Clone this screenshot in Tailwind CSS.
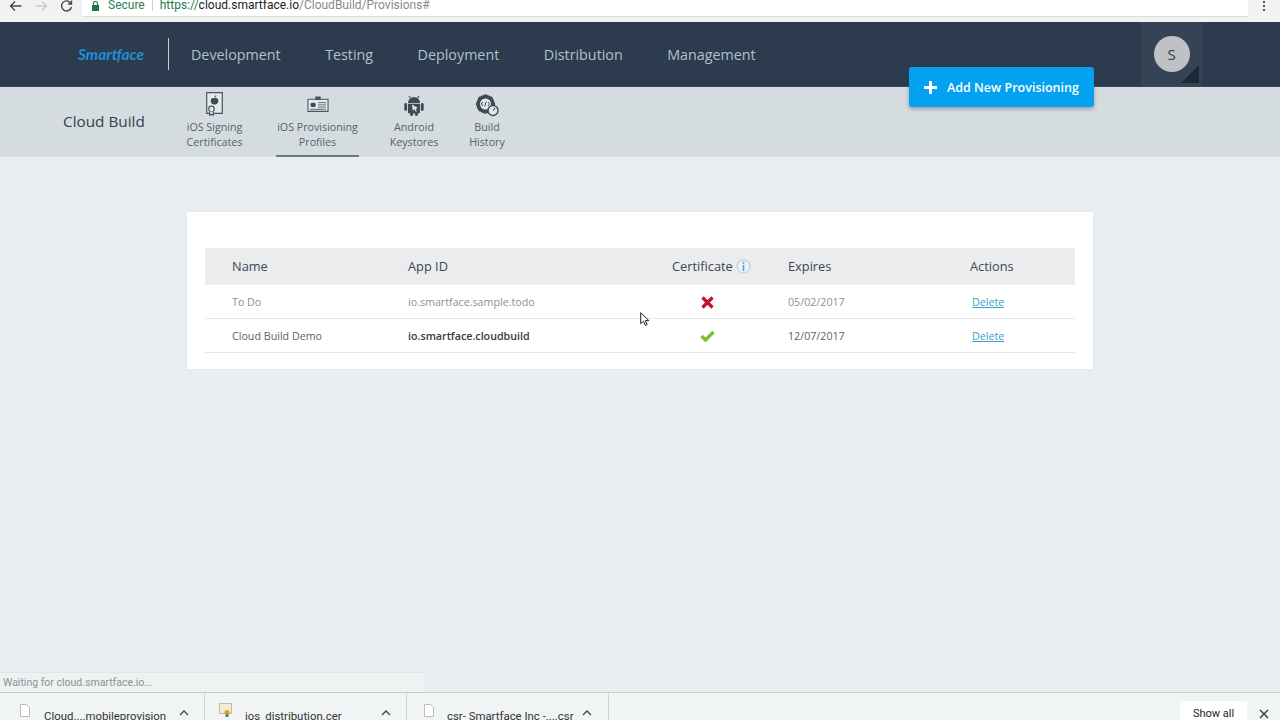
<!DOCTYPE html>
<html lang="en">
<head>
  <meta charset="UTF-8" />
  <title>Cloud Build</title>
  <script src="https://cdn.jsdelivr.net/npm/@tailwindcss/browser@4"></script>
</head>
<body class="w-[1280px] h-[720px] overflow-hidden bg-[#e9eff0] flex flex-col font-['Open_Sans',sans-serif] relative">

  <!-- browser toolbar -->
  <div class="h-[22px] shrink-0 bg-[#f2f2f2] flex items-start">
    <div class="w-[82px] h-[12px] flex items-center shrink-0 text-[#555]">
      <svg class="ml-[9px]" width="13" height="12" viewBox="0 0 13 12" fill="none" stroke="#444" stroke-width="1.3"><path d="M12.5 6H1.5M6 1.5 1.5 6 6 10.500"/></svg>
      <svg class="ml-[13px]" width="13" height="12" viewBox="0 0 13 12" fill="none" stroke="#ccc" stroke-width="1.3"><path d="M.5 6h11M7 1.500 11.500 6 7 10.500"/></svg>
      <svg class="ml-[12px]" width="13" height="12" viewBox="0 0 13 12" fill="none" stroke="#444" stroke-width="1.400"><path d="M11 3.500A5 5 0 1 0 11.500 7"/><path d="M11.500 .5v3.500H8" /></svg>
    </div>
    <div class="w-[1166px] h-[17px] bg-white border-b border-[#dcdcdc] flex items-start font-['Roboto',sans-serif] text-[12px] leading-[11px]">
      <svg class="ml-[9px] mt-[1px]" width="9" height="10" viewBox="0 0 9 10" fill="#1e7a45"><path d="M1 4h7v6H1z"/><path d="M2.500 4V2.500a2 2 0 0 1 4 0V4" fill="none" stroke="#1e7a45" stroke-width="1.200"/></svg>
      <span class="ml-[8px] text-[#2f7d55]">Secure</span>
      <span class="ml-[7px] w-px h-[11px] bg-[#cfcfcf]"></span>
      <span class="ml-[7px] text-[#1e7a45]">https://</span><span class="text-[#222]">cloud.smartface.io</span><span class="text-[#8a8a8a]">/CloudBuild/Provisions#</span>
    </div>
    <div class="flex-1 flex justify-center pt-[1px]">
      <div class="flex flex-col gap-[2px]">
        <span class="w-[2px] h-[2px] bg-[#555]"></span>
        <span class="w-[2px] h-[2px] bg-[#555]"></span>
        <span class="w-[2px] h-[2px] bg-[#555]"></span>
      </div>
    </div>
  </div>

  <!-- main nav -->
  <nav class="h-[65px] shrink-0 bg-[#2c3b4e] flex items-center border-b border-[#3a4a5c]">
    <div class="w-[168px] shrink-0 pl-[78px] text-[15.500px] leading-[16px] font-bold italic text-[#1f8fd6] font-['Lato',sans-serif] -mt-[1px]">Smartface</div>
    <span class="w-px h-[32px] bg-[#c9d2da]"></span>
    <div class="ml-[22px] flex gap-[44.500px] text-[14.300px] text-[#b3c0cd] mt-[2px]">
      <span>Development</span>
      <span>Testing</span>
      <span>Deployment</span>
      <span>Distribution</span>
      <span>Management</span>
    </div>
    <div class="ml-auto mr-[78px] w-[61px] h-[64px] bg-[#354355] relative flex items-center justify-center">
      <div class="w-[36px] h-[36px] rounded-full bg-[#bfc1c5] text-[#333d49] text-[15px] flex items-center justify-center">S</div>
      <svg class="absolute right-[3px] bottom-[3px]" width="18" height="18" viewBox="0 0 18 18"><path d="M18 0v18H0z" fill="#1c2939"/></svg>
    </div>
  </nav>

  <!-- sub nav -->
  <div class="h-[70px] shrink-0 bg-[#d5dce0] flex text-[#56616c] text-[10.700px] leading-[15px] text-center">
    <div class="w-[175px] shrink-0 pl-[63px] pt-[24px] text-left text-[15.300px] leading-[20px] font-medium text-[#36414d]">Cloud Build</div>
    <div class="w-[79px] shrink-0 pt-[5px] flex flex-col items-center">
      <svg width="17" height="24" viewBox="0 0 17 24"><path d="M.7.7h15.600v20.600H.7z" fill="#e3e8eb" stroke="#4a5560" stroke-width="1.200"/><path d="M8.500 6.300c-2-1-3.800.2-3.800 2.300 0 2 1.400 3.900 2.400 3.900.6 0 .8-.3 1.400-.3s.8.3 1.400.3c1 0 2.400-1.800 2.400-3.900 0-2.100-1.800-3.300-3.800-2.300zM8.400 5.600c0-1.300.8-2.100 1.900-2.300 0 1.300-.8 2.200-1.900 2.300z" fill="#3d4853"/><circle cx="5.500" cy="17" r="2.800" fill="#e3e8eb" stroke="#4a5560" stroke-width="1.200"/><path d="M3.700 19.500v4l1.800-1.300 1.800 1.300v-4" fill="#e3e8eb" stroke="#4a5560" stroke-width="1.100"/></svg>
      <span class="mt-[4px]">iOS Signing<br>Certificates</span>
    </div>
    <div class="ml-[22px] w-[83px] h-[70px] shrink-0 pt-[9px] flex flex-col items-center border-b-2 border-[#6c7681]">
      <svg width="24" height="16" viewBox="0 0 24 18"><path d="M.7 3.700h22.600v13.600H.7z" fill="#e3e8eb" stroke="#4a5560" stroke-width="1.200"/><path d="M9 .5h6v4H9z" fill="#4a5560"/><path d="M6.500 7.800c-1.600-.8-3 .2-3 1.800s1.100 3.100 1.900 3.100c.5 0 .6-.2 1.100-.2s.6.2 1.100.2c.8 0 1.900-1.500 1.900-3.100s-1.400-2.600-3-1.800z" fill="#3d4853"/><path d="M12 7.500h9M12 10h9M12 12.500h9M3 15h18" stroke="#5f6a75" stroke-width="1.100"/></svg>
      <span class="mt-[8px]">iOS Provisioning<br>Profiles</span>
    </div>
    <div class="ml-[6px] w-[98px] shrink-0 pt-[7px] flex flex-col items-center">
      <svg width="20" height="22" viewBox="0 0 20 22"><path d="M5 2l1.500 2M15 2l-1.500 2" stroke="#3f4a55" stroke-width="1.100"/><path d="M4 9a6 6 0 0 1 12 0z" fill="#3f4a55"/><path d="M4 9.800h12v8.200a1.500 1.500 0 0 1-1.500 1.500h-9A1.500 1.500 0 0 1 4 18z" fill="#3f4a55"/><rect x=".3" y="9" width="2.800" height="8" rx="1.400" fill="#3f4a55"/><rect x="16.900" y="9" width="2.800" height="8" rx="1.400" fill="#3f4a55"/><rect x="6.200" y="18" width="2.800" height="4" rx="1.300" fill="#3f4a55"/><rect x="11" y="18" width="2.800" height="4" rx="1.300" fill="#3f4a55"/><path d="M8 10.500l6 3.500-2.300.8 1.200 2.500-1.200.5-1.200-2.500-1.700 1.500z" fill="#dfe4e7"/></svg>
      <span class="mt-[4px]">Android<br>Keystores</span>
    </div>
    <div class="w-[50px] -ml-[1px] shrink-0 pt-[7px] flex flex-col items-center">
      <svg width="24" height="23" viewBox="0 0 24 23"><circle cx="10.500" cy="10" r="7" fill="none" stroke="#3f4a55" stroke-width="4.500"/><circle cx="10.500" cy="10" r="5.500" fill="#e3e8eb"/><path d="M10.500 .5v3M10.500 16.500v3M1 10h3M17 10h3M3.800 3.300l2.100 2.100M15.100 14.600l2.100 2.100M17.200 3.300l-2.100 2.100M5.900 14.600l-2.100 2.100" stroke="#3f4a55" stroke-width="2.800"/><path d="M8 8l-1.800 2L8 12M13 8l1.800 2L13 12M11.300 7.500l-1.600 5" fill="none" stroke="#3f4a55" stroke-width="1"/><circle cx="18" cy="16.500" r="5" fill="#e3e8eb" stroke="#3f4a55" stroke-width="1.400"/><path d="M18 16.500l2-2.500" stroke="#3f4a55" stroke-width="1.200"/></svg>
      <span class="mt-[3px]">Build<br>History</span>
    </div>
  </div>

  <!-- floating action -->
  <button class="absolute left-[909px] top-[67px] w-[185px] h-[40px] rounded-[3px] bg-[#03a1ef] shadow-[0_2px_4px_rgba(40,60,80,.4)] flex items-center text-white text-[12.500px] font-semibold">
    <svg class="ml-[15px]" width="13" height="13" viewBox="0 0 13 13" fill="#fff"><path d="M5 0h3v5h5v3H8v5H5V8H0V5h5z"/></svg>
    <span class="ml-[10px] mt-[2px]">Add New Provisioning</span>
  </button>

  <!-- provisions card -->
  <main class="flex-1 pt-[54px] pl-[186px]">
    <section class="w-[908px] h-[159px] bg-white border border-[#e3e8ea] rounded-[2px] pt-[36px] px-[18px]">
      <div class="h-[37px] bg-[#ebecee] grid grid-cols-[176px_264px_116px_182px_1fr] items-center pl-[27px] text-[12.800px] text-[#3c4652]">
        <span>Name</span>
        <span>App ID</span>
        <span class="flex items-center gap-[3px]">Certificate
          <svg width="15" height="15" viewBox="0 0 15 15"><circle cx="7.500" cy="7.500" r="6.500" fill="#eef2f5" stroke="#c6d2dc" stroke-width="1.300"/><path d="M6.700 3h1.600v1.700H6.700zM6.700 6h1.600v6H6.700z" fill="#4aa3df"/></svg>
        </span>
        <span>Expires</span>
        <span>Actions</span>
      </div>
      <div class="h-[34px] pt-[1px] border-b border-[#e6e9eb] grid grid-cols-[176px_264px_116px_182px_1fr] items-center pl-[27px] text-[10.700px] text-[#8b8f93]">
        <span>To Do</span>
        <span>io.smartface.sample.todo</span>
        <span class="pl-[29px]"><svg width="13" height="13" viewBox="0 0 13 13"><path d="M1.500 1.500l10 10M11.500 1.500l-10 10" stroke="#c4122f" stroke-width="3.200"/></svg></span>
        <span>05/02/2017</span>
        <a href="#" class="ml-[2px] text-[#3ba0c8] underline">Delete</a>
      </div>
      <div class="h-[34px] pt-[1px] border-b border-[#e6e9eb] grid grid-cols-[176px_264px_116px_182px_1fr] items-center pl-[27px] text-[10.700px] text-[#5c6166]">
        <span>Cloud Build Demo</span>
        <span class="font-semibold text-[#333b44]">io.smartface.cloudbuild</span>
        <span class="pl-[28px]"><svg width="15" height="12" viewBox="0 0 15 12"><path d="M1.500 6l4 4L13.500 2" fill="none" stroke="#7cc130" stroke-width="3.400"/></svg></span>
        <span>12/07/2017</span>
        <a href="#" class="ml-[2px] text-[#3ba0c8] underline">Delete</a>
      </div>
    </section>
  </main>

  <!-- cursor -->
  <svg class="absolute left-[640px] top-[312px]" width="10" height="15" viewBox="0 0 10 15"><path d="M.7.7v11l2.800-2.400 1.800 4.200 1.800-.8-1.800-4.100h3.600z" fill="#fff" stroke="#222" stroke-width="1"/></svg>

  <!-- status bubble -->
  <div class="absolute left-0 top-[672px] w-[426px] h-[20px] bg-[#eef2f2] border-t border-r border-[#e2e6e6] pl-[3px] text-[10.500px] leading-[19px] text-[#8d9193] font-['Roboto',sans-serif]">Waiting for cloud.smartface.io...</div>

  <!-- downloads bar -->
  <footer class="h-[28px] shrink-0 bg-[#f1f4f4] border-t border-[#c9cdcd] flex font-['Roboto',sans-serif] text-[11.400px] text-[#333] overflow-hidden">
    <div class="w-[205px] h-[28px] border-r border-[#cfd2d2] flex items-start pt-[12px] pl-[20px] shrink-0 leading-[22px]">
      <svg width="10" height="13" viewBox="0 0 10 13" class="-mt-[1px]"><path d="M.5.500h6l3 3v9h-9z" fill="#fff" stroke="#bbb"/></svg>
      <span class="ml-[14px] w-[135px]">Cloud....mobileprovision</span>
      <svg width="10" height="6" viewBox="0 0 10 6" class="mt-[5px]" fill="none" stroke="#444" stroke-width="1.300"><path d="M1 5l4-4 4 4"/></svg>
    </div>
    <div class="w-[202px] h-[28px] border-r border-[#cfd2d2] flex items-start pt-[12px] pl-[14px] shrink-0 leading-[22px]">
      <svg width="13" height="14" viewBox="0 0 13 14" class="-mt-[2px]"><path d="M.5.500h12v10H.5z" fill="#f4e9d2" stroke="#c9b99a"/><circle cx="8" cy="9.500" r="2.500" fill="#d9a21b"/><path d="M6.500 11v3h3v-3z" fill="#4a78b5"/></svg>
      <span class="ml-[13px] w-[136px]">ios_distribution.cer</span>
      <svg width="10" height="6" viewBox="0 0 10 6" class="mt-[5px]" fill="none" stroke="#444" stroke-width="1.300"><path d="M1 5l4-4 4 4"/></svg>
    </div>
    <div class="w-[202px] h-[28px] border-r border-[#cfd2d2] flex items-start pt-[12px] pl-[17px] shrink-0 leading-[22px]">
      <svg width="10" height="13" viewBox="0 0 10 13" class="-mt-[1px]"><path d="M.5.500h6l3 3v9h-9z" fill="#fff" stroke="#bbb"/></svg>
      <span class="ml-[13px] w-[135px]">csr- Smartface Inc -....csr</span>
      <svg width="10" height="6" viewBox="0 0 10 6" class="mt-[5px]" fill="none" stroke="#444" stroke-width="1.300"><path d="M1 5l4-4 4 4"/></svg>
    </div>
    <div class="ml-auto mr-[11px] flex items-start">
      <div class="mt-[8px] w-[67px] h-[20px] bg-white text-center text-[11px] leading-[26px] text-[#222]">Show all</div>
      <svg class="ml-[12px] mt-[16px]" width="10" height="10" viewBox="0 0 10 10" stroke="#333" stroke-width="1.300"><path d="M1 1l8 8M9 1l-8 8"/></svg>
    </div>
  </footer>
</body>
</html>
